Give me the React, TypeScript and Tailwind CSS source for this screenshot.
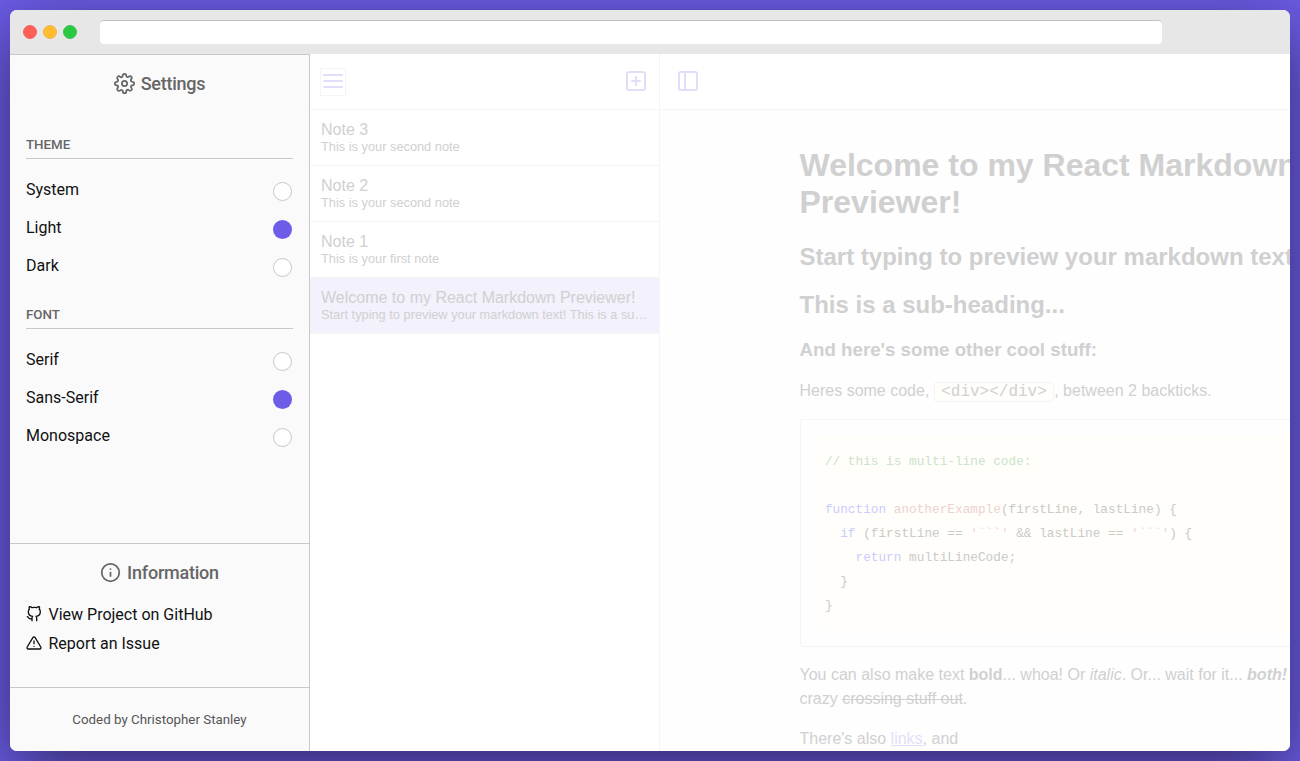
import type { ReactNode } from "react";
import { FiAlertTriangle, FiGithub, FiInfo, FiPlusSquare, FiSettings, FiSidebar } from "react-icons/fi";

function Option({ label, checked = false }: { label: string; checked?: boolean }) {
  return (
    <label className="flex h-[38.2px] items-center justify-between text-base text-[#111]">
      <span>{label}</span>
      <span
        className={
          checked
            ? "mt-[3px] mr-px size-[19px] rounded-full bg-[#6c5ce7]"
            : "mt-[3px] mr-px size-[19px] rounded-full border border-[#c8c8c8] bg-white"
        }
      />
    </label>
  );
}

function Group({ title, children }: { title: string; children: ReactNode }) {
  return (
    <section>
      <h3 className="mb-3 flex h-[23px] items-start border-b border-[#c8c8c8] pt-px text-[13.33px] leading-4 font-medium text-[#666]">
        {title}
      </h3>
      {children}
    </section>
  );
}

function Sidebar() {
  return (
    <aside className="flex w-[300px] shrink-0 flex-col border-t border-r border-[#c8c8c8] bg-[#fafafa] font-[Roboto,sans-serif]">
      <div className="h-[488px] px-4">
        <h2 className="flex h-[58px] items-center justify-center gap-1.5 text-lg font-medium tracking-[-0.25px] text-[#666]">
          <FiSettings size={21} className="-mt-px" />
          Settings
        </h2>
        <div className="flex flex-col gap-5 pt-[23px]">
          <Group title="THEME">
            <Option label="System" />
            <Option label="Light" checked />
            <Option label="Dark" />
          </Group>
          <Group title="FONT">
            <Option label="Serif" />
            <Option label="Sans-Serif" checked />
            <Option label="Monospace" />
          </Group>
        </div>
      </div>
      <div className="h-36 border-t border-[#c8c8c8] px-4">
        <h2 className="flex h-[57px] items-center justify-center gap-1.5 text-lg font-medium tracking-[-0.22px] text-[#666]">
          <FiInfo size={21} />
          Information
        </h2>
        <ul className="-mt-px text-base text-[#111]">
          <li className="flex h-[29px] items-center gap-[6.5px]">
            <FiGithub size={16} className="-mt-px" />
            View Project on GitHub
          </li>
          <li className="flex h-[29px] items-center gap-[6.5px]">
            <FiAlertTriangle size={16} className="-mt-px" />
            Report an Issue
          </li>
        </ul>
      </div>
      <footer className="flex flex-1 items-center justify-center border-t border-[#c8c8c8] text-[13.33px] text-[#555]">
        Coded by Christopher Stanley
      </footer>
    </aside>
  );
}

const notes = [
  { title: "Note 3", text: "This is your second note" },
  { title: "Note 2", text: "This is your second note" },
  { title: "Note 1", text: "This is your first note" },
  {
    title: "Welcome to my React Markdown Previewer!",
    text: "Start typing to preview your markdown text! This is a sub-heading...",
    active: true,
  },
];

function NoteList() {
  return (
    <div className="w-[350px] shrink-0 border-r border-[#f4f4f4] bg-white">
      <div className="flex h-14 items-center justify-between border-b border-[#f4f4f4] pr-[11px] pl-2.5 text-[#e2def9]">
        <span className="flex h-7 w-[26px] flex-col items-center gap-1 border border-[#f4f4f4] pt-[5px]">
          <span className="h-0.5 w-5 rounded-full bg-[#e2def9]" />
          <span className="h-0.5 w-5 rounded-full bg-[#e2def9]" />
          <span className="h-0.5 w-5 rounded-full bg-[#e2def9]" />
        </span>
        <FiPlusSquare size={24} className="mb-0.5" />
      </div>
      {notes.map((n) => (
        <div
          key={n.title}
          className={
            n.active
              ? "h-14 border-b border-[#f4f4f4] bg-[#f3f1fc] px-[11px] pt-2.5 text-[#d0d0d0]"
              : "h-14 border-b border-[#f4f4f4] px-[11px] pt-2.5 text-[#d0d0d0]"
          }
        >
          <div className="truncate text-base leading-5">{n.title}</div>
          <div className="truncate text-[12.8px] leading-[14px]">{n.text}</div>
        </div>
      ))}
    </div>
  );
}

const Keyword = ({ children }: { children: string }) => <span className="text-[#ccccfe]">{children}</span>;
const Str = ({ children }: { children: string }) => <span className="text-[#efd0dc]">{children}</span>;

function CodeBlock() {
  return (
    <div className="mt-[15px] h-[228px] rounded-[3px] border border-[#f4f4f4] p-4">
      <pre className="h-[194px] bg-[#fffefa] px-[8.4px] pt-3.5 font-['Liberation_Mono',monospace] text-[12.75px] leading-6 text-[#cacac8]">
        <div className="h-6 text-[#cce3cc]">{"// this is multi-line code:"}</div>
        <div className="h-6" />
        <div className="h-6">
          <Keyword>function</Keyword> <span className="text-[#ecd2d0]">anotherExample</span>
          {"(firstLine, lastLine) {"}
        </div>
        <div className="h-6">
          {"  "}
          <Keyword>if</Keyword>
          {" (firstLine == "}
          <Str>{"'```'"}</Str>
          {" && lastLine == "}
          <Str>{"'```'"}</Str>
          {") {"}
        </div>
        <div className="h-6">
          {"    "}
          <Keyword>return</Keyword>
          {" multiLineCode;"}
        </div>
        <div className="h-6">{"  }"}</div>
        <div className="h-6">{"}"}</div>
      </pre>
    </div>
  );
}

function Preview() {
  return (
    <main className="w-[630px] shrink-0 overflow-hidden bg-[#fefefe]">
      <div className="flex h-14 items-center border-b border-[#f4f4f4] bg-white pb-0.5 pl-4 text-[#e2def9]">
        <FiSidebar size={24} />
      </div>
      <article className="ml-[139.5px] w-[645px] pt-[37px] text-base leading-6 text-[#d0d0d0]">
        <h1 className="text-[32px] leading-[37px] font-bold">Welcome to my React Markdown Previewer!</h1>
        <h2 className="mt-[22px] text-2xl leading-7 font-bold">Start typing to preview your markdown text!</h2>
        <h2 className="mt-5 text-2xl leading-7 font-bold">This is a sub-heading...</h2>
        <h3 className="mt-5 text-[18.72px] leading-[22px] font-bold">And here's some other cool stuff:</h3>
        <p className="mt-[18px]">
          Heres some code,{" "}
          <code className="rounded-[3px] border border-[#f4f4f4] bg-[#fffefa] px-[6.4px] font-['Liberation_Mono',monospace]">
            {"<div></div>"}
          </code>
          , between 2 backticks.
        </p>
        <CodeBlock />
        <p className="mt-4">
          You can also make text <strong>bold</strong>... whoa! Or <em>italic</em>. Or... wait for it...{" "}
          <strong>
            <em>both!</em>
          </strong>{" "}
          And feel free to go crazy <del>crossing stuff out</del>.
        </p>
        <p className="mt-4">
          There's also <a className="text-[#e2def9] underline">links</a>, and
        </p>
      </article>
    </main>
  );
}

export default function App() {
  return (
    <div className="h-[761px] w-[1300px] overflow-hidden bg-[#6c5ce7] p-2.5 font-['Liberation_Sans',Arial,sans-serif]">
      <div className="flex h-[741px] flex-col overflow-hidden rounded-[7px] bg-white shadow-[0_20px_68px_rgba(0,0,0,0.55)]">
        <header className="flex h-11 shrink-0 items-center bg-[#e7e7e7] pl-[13px]">
          <div className="flex gap-1.5">
            <span className="size-3.5 rounded-full border border-[#f4655f] bg-[#ff5f57]" />
            <span className="size-3.5 rounded-full border border-[#eeb456] bg-[#ffbd2e]" />
            <span className="size-3.5 rounded-full border border-[#3fbf57] bg-[#28ca42]" />
          </div>
          <div className="ml-[23px] h-6 w-[1062px] rounded border-t border-[#c0c0c0] bg-white" />
        </header>
        <div className="flex min-h-0 flex-1">
          <Sidebar />
          <NoteList />
          <Preview />
        </div>
      </div>
    </div>
  );
}
